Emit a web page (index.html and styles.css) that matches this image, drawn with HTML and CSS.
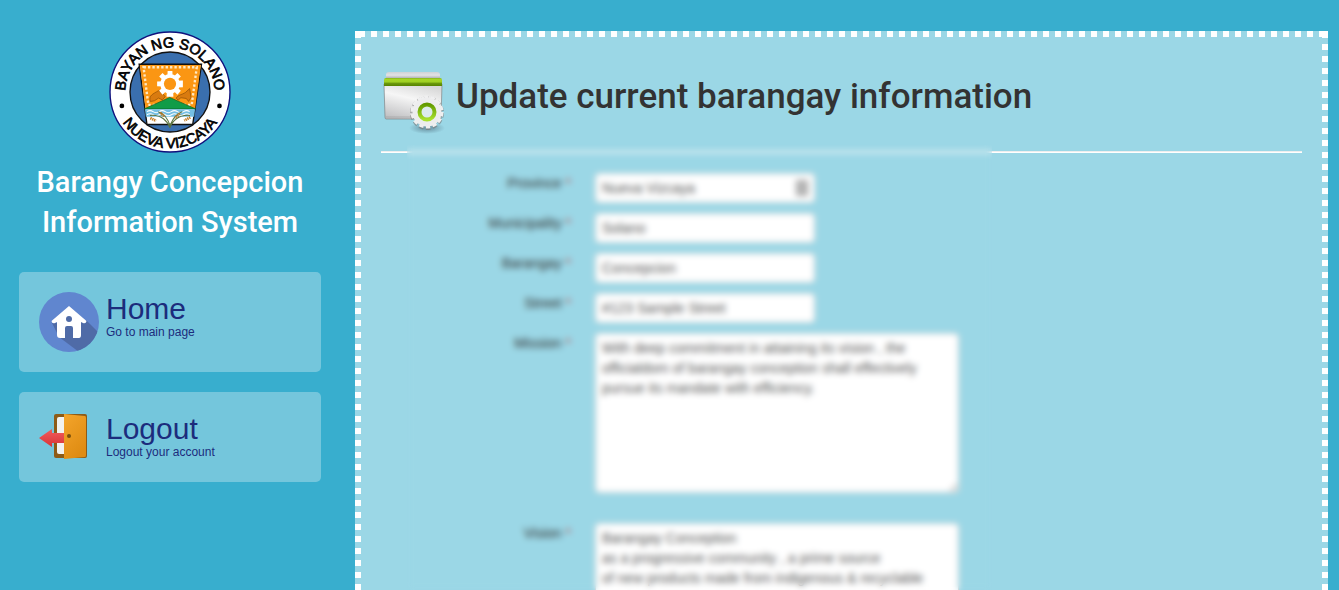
FILE: index.html
```html
<!DOCTYPE html>
<html lang="en">
<head>
<meta charset="utf-8">
<title>Update current barangay information</title>
<link rel="stylesheet" href="styles.css">
</head>
<body>
<div class="app">
  <aside class="sidebar">
    <svg class="seal" viewBox="0 0 360 360" role="img" aria-label="Bayan ng Solano, Nueva Vizcaya">
      <defs>
        <path id="arc-top" d="M54 220A132 132 0 1 1 306 220"/>
        <path id="arc-bottom" d="M14 180A166 166 0 0 0 346 180"/>
      </defs>
      <circle cx="180" cy="180" r="177" fill="#fff" stroke="#10107c" stroke-width="4"/>
      <circle cx="180" cy="180" r="118" fill="#3a6fae" stroke="#111" stroke-width="4"/>
      <path d="M89 98H273L247 276H112Z" fill="#fff" stroke="#111" stroke-width="4"/>
      <path d="M91 100H271L254 230H108Z" fill="#fb9613"/>
      <path d="M102 107H259L244 218H116Z" fill="none" stroke="#ffe9c4" stroke-width="7" stroke-dasharray="7 6"/>
      <path d="M122 208C116 190 130 186 146 176L158 184L166 194L157 203L146 198L134 206ZM198 198C204 188 215 188 225 182L238 170L242 196L235 208L228 199L212 197L204 204Z" fill="#d97b10" stroke="#8d4b05" stroke-width="2"/>
      <g fill="#fff">
        <circle cx="180" cy="156" r="29"/>
        <path d="M173 118h14l3 76h-20zM142 149v14l76 3v-20zM148 134l10-10 54 52-10 12zM202 124l10 10-54 54-10-12z"/>
      </g>
      <circle cx="180" cy="156" r="18" fill="#fb9613"/>
      <path d="M104 230L179 196L256 230Z" fill="#109c48" stroke="#075f25" stroke-width="2"/>
      <path d="M106 231H254L251 253H109Z" fill="#75bfe3"/>
      <path d="M112 238q9-6 18 0t18 0t18 0t18 0t18 0t18 0t18 0M112 247q9-6 18 0t18 0t18 0t18 0t18 0t18 0t18 0" fill="none" stroke="#fff" stroke-width="3"/>
      <path d="M180 286C173 266 155 246 121 249M180 286C186 266 205 246 239 249M180 278C175 264 165 244 145 238M180 278C187 264 195 244 216 238" fill="none" stroke="#5b7340" stroke-width="3"/>
      <path d="M122 257l17 8M151 241l13 12M209 244l-14 13M240 255l-18 9" stroke="#c37b23" stroke-width="8" stroke-dasharray="4 2"/>
      <circle cx="38" cy="221" r="7"/><circle cx="326" cy="221" r="7"/>
      <text><textPath href="#arc-top" startOffset="50%">BAYAN NG SOLANO</textPath></text>
      <text><textPath href="#arc-bottom" startOffset="50%">NUEVA VIZCAYA</textPath></text>
    </svg>
    <h2 class="brand">Barangy Concepcion Information System</h2>
    <nav class="menu">
      <a class="card card-home" href="#home">
        <svg class="card-icon" viewBox="0 0 60 60" aria-hidden="true">
          <defs><clipPath id="disc"><circle cx="30" cy="30" r="30"/></clipPath></defs>
          <circle cx="30" cy="30" r="30" fill="#6086cf"/>
          <path clip-path="url(#disc)" d="M47 28L68 49L56 72L20 45L13 31Z" fill="#4f6ba7"/>
          <path d="M30 14L12.500 29Q13 32 16 31L18 30V43Q18 46 21 46H26V36Q26 34 28 34H32Q34 34 34 36V46H40Q42 46 42 43V30L44 31Q47 32 47.500 29Z" fill="#fff"/>
          <circle cx="30" cy="27" r="3" fill="#4f6ba7"/>
        </svg>
        <span class="card-text"><span class="card-title">Home</span><span class="card-note">Go to main page</span></span>
      </a>
      <a class="card card-logout" href="#logout">
        <svg class="card-icon" viewBox="0 0 60 50" aria-hidden="true">
          <defs>
            <linearGradient id="door" x2="0.500" y2="1"><stop stop-color="#f4a52b"/><stop offset="1" stop-color="#df8c13"/></linearGradient>
            <linearGradient id="arrow" x2="0" y2="1"><stop stop-color="#f15c5c"/><stop offset="1" stop-color="#d83438"/></linearGradient>
          </defs>
          <rect x="15" y="2" width="33" height="44" rx="2" fill="#8d5b17"/>
          <path d="M18 7Q18 5 20 5H25V42H20Q18 42 18 40Z" fill="#f2f2f0"/>
          <path d="M0 26L13 17V21H25V31H13V35Z" fill="url(#arrow)"/>
          <path d="M25 2L46 4Q47 4 47 6V43Q47 45 46 45L25 47Z" fill="url(#door)"/>
          <circle cx="30" cy="24" r="2" fill="#79500d"/>
        </svg>
        <span class="card-text"><span class="card-title">Logout</span><span class="card-note">Logout your account</span></span>
      </a>
    </nav>
  </aside>

  <main class="panel">
    <header class="panel-head">
      <svg class="head-icon" viewBox="0 0 64 64" aria-hidden="true">
        <defs>
          <linearGradient id="paper" x1="0.600" x2="0.200" y2="1"><stop stop-color="#d8d8d8"/><stop offset="0.400" stop-color="#f6f6f6"/><stop offset="1" stop-color="#c0c0c2"/></linearGradient>
          <linearGradient id="bar" x2="0" y2="1"><stop stop-color="#7fae17"/><stop offset="0.150" stop-color="#a6d626"/><stop offset="0.500" stop-color="#9ed022"/><stop offset="0.650" stop-color="#6c9a0c"/><stop offset="1" stop-color="#568300"/></linearGradient>
          <linearGradient id="back" x2="0" y2="1"><stop stop-color="#cfd2d6"/><stop offset="0.400" stop-color="#e2e2e4"/><stop offset="1" stop-color="#8f9298"/></linearGradient>
          <linearGradient id="ring" x2="0" y2="1"><stop stop-color="#639b00"/><stop offset="1" stop-color="#a8e12e"/></linearGradient>
          <radialGradient id="shade"><stop stop-color="#345" stop-opacity="0.500"/><stop offset="1" stop-color="#345" stop-opacity="0"/></radialGradient>
        </defs>
        <path d="M5 3Q5 0 8 0H56Q59 0 59 3V8H5Z" fill="url(#back)"/>
        <path d="M3 12H61L60 47H5Q4 47 4 45Z" fill="url(#paper)" stroke="#777" stroke-opacity="0.600"/>
        <path d="M5 45H59" stroke="#888" stroke-opacity="0.400"/>
        <path d="M3 8Q3 6 5 6H59Q61 6 61 8V14H3Z" fill="url(#bar)"/>
        <ellipse cx="46" cy="56" rx="18" ry="6" fill="url(#shade)"/>
        <circle cx="46" cy="41" r="14.500" fill="none" stroke="#777" stroke-opacity="0.600" stroke-width="5" stroke-dasharray="4.200 2.308"/>
        <circle cx="46" cy="40" r="14.500" fill="#efeff0" stroke="#efeff0" stroke-width="4" stroke-dasharray="4.200 2.308"/>
        <circle cx="46" cy="40" r="14" fill="#ededee"/>
        <circle cx="46" cy="40" r="7.500" fill="#dcebed" stroke="url(#ring)" stroke-width="4"/>
      </svg>
      <h1 class="title">Update current barangay information</h1>
    </header>
    <hr class="rule">
    <form class="form">
      <div class="row">
        <label for="province">Province <span class="req">*</span></label>
        <div class="field">
          <input id="province" type="text" value="Nueva Vizcaya">
          <svg class="field-icon" viewBox="0 0 12 16" aria-hidden="true"><path d="M0 0H12V16H0Z" fill="#aaa"/><path d="M3 4H9M3 8H9M3 12H9" stroke="#ddd"/></svg>
        </div>
      </div>
      <div class="row">
        <label for="municipality">Municipality <span class="req">*</span></label>
        <input id="municipality" type="text" value="Solano">
      </div>
      <div class="row">
        <label for="barangay">Barangay <span class="req">*</span></label>
        <input id="barangay" type="text" value="Concepcion">
      </div>
      <div class="row">
        <label for="street">Street <span class="req">*</span></label>
        <input id="street" type="text" value="#123 Sample Street">
      </div>
      <div class="row row-tall">
        <label for="mission">Mission <span class="req">*</span></label>
        <textarea id="mission">With deep commitment in attaining its vision , the
officialdom of barangay conception shall effectively
pursue its mandate with efficiency.</textarea>
      </div>
      <div class="row row-tall">
        <label for="vision">Vision <span class="req">*</span></label>
        <textarea id="vision">Barangay Conception
as a progressive community , a prime source
of new products made from indigenous &amp; recyclable</textarea>
      </div>
    </form>
    <div class="veil"></div>
  </main>
</div>
</body>
</html>
```
FILE: styles.css
```css
* { box-sizing: border-box; }

body {
  margin: 0;
  height: 100vh;
  overflow: hidden;
  background: #38aece;
  color: #333;
  font: 14px/20px "Liberation Sans", Arial, sans-serif;
}

.app {
  display: flex;
  gap: 34px;
  padding: 31px 11px 31px 19px;
}

.sidebar {
  flex: 0 0 302px;
  display: flex;
  flex-direction: column;
  align-items: center;
}

.seal { width: 122px; height: 122px; }
.seal text {
  font: 43px "Liberation Sans", Arial, sans-serif;
  text-anchor: middle;
  stroke: #000;
  stroke-width: 2px;
}

.brand, .title { font-family: Roboto, sans-serif; font-weight: 500; }

.brand {
  margin: 9px 0 30px;
  color: #fff;
  font-size: 29px;
  line-height: 40px;
  text-align: center;
}

.menu { display: flex; flex-direction: column; gap: 20px; width: 100%; }

.card {
  display: flex;
  gap: 7px;
  padding: 20px;
  border-radius: 5px;
  background: #74c6dc;
  color: #1c2c7c;
  text-decoration: none;
}
.card-icon { width: 60px; }
.card-home .card-icon { height: 60px; }
.card-logout .card-icon { height: 50px; }
.card-text { display: flex; flex-direction: column; }
.card-title { font-size: 30px; line-height: 34px; }
.card-note { font-size: 12px; line-height: 12px; }

.panel {
  position: relative;
  flex: 1;
  min-width: 0;
  padding: 41px 26px;
  background:
    linear-gradient(#fff, #fff) 0 0 / 6px 6px no-repeat,
    linear-gradient(#fff, #fff) 100% 0 / 6px 6px no-repeat,
    linear-gradient(90deg, #fff 50%, transparent 50%) 4px 0 / 12px 6px repeat-x,
    linear-gradient(#fff 50%, transparent 50%) 0 1px / 6px 12px repeat-y,
    linear-gradient(#fff 50%, transparent 50%) 100% 1px / 6px 12px repeat-y,
    #9bd7e6;
}

.panel-head { display: flex; gap: 11px; height: 79px; }
.head-icon { width: 64px; height: 64px; }
.title { margin: 0; font-size: 35px; line-height: 50px; }

.rule { margin: 0; border: 0; border-top: 1px solid #eee; border-bottom: 1px solid #fff; }

.form { display: flex; flex-direction: column; gap: 10px; padding-top: 20px; }
.row { display: grid; grid-template-columns: 190px 1fr; column-gap: 24px; align-items: start; justify-items: start; }
.row-tall { padding-bottom: 20px; }
.row label { justify-self: end; }
.req { color: #b94a48; }

.field { position: relative; }
.field-icon { position: absolute; right: 7px; top: 7px; width: 12px; height: 16px; }

input, textarea {
  display: block;
  width: 220px;
  height: 30px;
  padding: 4px 6px;
  border: 1px solid #ccc;
  border-radius: 4px;
  background: #fff;
  color: #555;
  font: inherit;
}
textarea { width: 364px; height: 160px; white-space: pre; overflow: hidden; }

/* Frosted cover that hides the record's details */
.veil {
  position: absolute;
  top: 114px;
  bottom: 0;
  left: 52px;
  width: 585px;
  backdrop-filter: blur(3px);
}
```
